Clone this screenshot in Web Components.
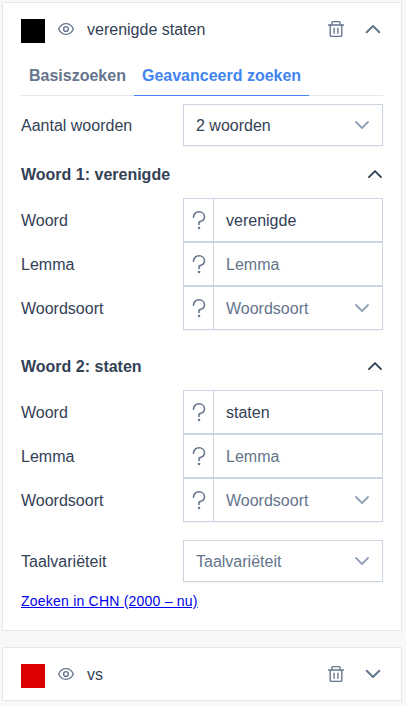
<!DOCTYPE html>
<html lang="nl">
<head>
<meta charset="utf-8">
<title>Zoeken</title>
<style>
  html { background: #f8f8f8; }
  body { margin: 0; padding: 2px; font: 16px/20px "Liberation Sans", Arial, sans-serif; color: #334155; }
</style>
</head>
<body>
<search-panel></search-panel>

<script>
const define = (name, html, setup) => {
  const template = document.createElement('template');
  template.innerHTML = html;
  customElements.define(name, class extends HTMLElement {
    constructor() {
      super();
      this.attachShadow({ mode: 'open' }).append(template.content.cloneNode(true));
    }
    connectedCallback() {
      if (setup) setup(this, this.shadowRoot);
    }
  });
};

const ICONS = {
  eye: [16, 16, '<path d="M.6 8C2.2 4.6 4.8 2.6 8 2.6S13.8 4.6 15.4 8C13.8 11.4 11.2 13.4 8 13.4S2.2 11.4 .6 8Z"/><circle cx="8" cy="8" r="2.4"/>', 1.4],
  trash: [16, 16, '<path d="M.5 4H15.5M2.2 4V13.9Q2.2 15.4 3.7 15.4H12.3Q13.8 15.4 13.8 13.9V4M3.9 3.8V2.1Q3.9.6 5.4.6H10.6Q12.1.6 12.1 2.1V3.8M6.1 7.2V12.2M9.9 7.2V12.2"/>', 1.35],
  up: [16, 16, '<path d="M1.7 11.3L8 5L14.3 11.3"/>', 2],
  down: [16, 16, '<path d="M1.7 4.7L8 11L14.3 4.7"/>', 2],
  'small-up': [14, 14, '<path d="M1 10.1L7 4.1L13 10.1"/>', 1.9],
  'small-down': [14, 14, '<path d="M1 4L7 10L13 4"/>', 1.9],
  help: [14, 20, '<path d="M1.5 7.2C1.5 4.1 3.9 1.8 7 1.8S12.5 4 12.5 6.8C12.5 9.8 10 11 8.6 11.4Q7 11.8 7 13V14.4"/><circle cx="7" cy="18" r=".5"/>', 1.6]
};

define('ui-icon', `
  <style>
    :host { display: block; flex: none; line-height: 0; }
    svg { display: block; fill: none; stroke: currentColor; stroke-linecap: round; stroke-linejoin: round; }
  </style>
  <div></div>`, (host, root) => {
  const [w, h, shape, stroke] = ICONS[host.getAttribute('name')];
  root.querySelector('div').innerHTML =
    `<svg width="${w}" height="${h}" viewBox="0 0 ${w} ${h}" stroke-width="${stroke}">${shape}</svg>`;
});

define('search-card', `
  <style>
    :host { display: block; box-sizing: border-box; width: 400px; border: 1px solid #e2e8f0; background: #fff; padding: 13px 18px 0; }
    header { display: flex; align-items: center; height: 26px; color: #64748b; }
    .swatch { width: 24px; height: 24px; margin: 3px 13px 0 0; background: var(--swatch); align-self: flex-start; }
    .title { flex: 1; margin-left: 13px; padding-top: 2px; color: #334155; }
    .toggle { margin: 0 2px 0 21px; }
  </style>
  <header>
    <div class="swatch"></div>
    <ui-icon name="eye"></ui-icon>
    <span class="title"><slot name="title"></slot></span>
    <ui-icon name="trash"></ui-icon>
    <div class="toggle"><slot name="toggle"></slot></div>
  </header>
  <slot></slot>`);

define('tab-bar', `
  <style>
    :host { display: flex; box-sizing: border-box; height: 41px; margin-top: 13px; border-bottom: 1px solid #e2e8f0; font-weight: 700; color: #64748b; }
    ::slotted(span) { box-sizing: border-box; height: 41px; padding: 11px 8px 0; border-bottom: 1px solid transparent; }
    ::slotted(.active) { color: #4285f0; border-bottom-color: #4285f0; }
  </style>
  <slot></slot>`);

define('form-row', `
  <style>
    :host { display: grid; grid-template-columns: 162px 200px; align-items: center; }
    span { padding-top: 2px; }
  </style>
  <span><slot name="label"></slot></span>
  <slot></slot>`);

define('select-box', `
  <style>
    :host { display: flex; align-items: center; justify-content: space-between; box-sizing: border-box; height: 42px; padding: 0 13px 0 12px; border: 1px solid #cbd5e1; background: #fff; box-shadow: 0 1px 2px rgba(18,18,23,.05); }
    :host([placeholder]) { color: #64748b; }
    span { padding-top: 2px; }
    ui-icon { color: #94a3b8; }
  </style>
  <span><slot></slot></span><ui-icon name="small-down"></ui-icon>`);

define('help-field', `
  <style>
    :host { display: flex; box-sizing: border-box; height: 44px; border: 1px solid #cbd5e1; background: #fff; }
    .help { display: flex; align-items: center; justify-content: center; box-sizing: border-box; width: 30px; padding-left: 1px; border-right: 1px solid #cbd5e1; color: #64748b; }
    .value { display: flex; flex: 1; align-items: center; justify-content: space-between; padding: 0 13px 0 12px; }
    .value span { padding-top: 2px; }
    :host([placeholder]) .value { color: #64748b; }
    .value ui-icon { display: none; color: #94a3b8; }
    :host([dropdown]) .value ui-icon { display: block; }
    :host([dropdown]) { box-shadow: 0 1px 2px rgba(18,18,23,.05); }
  </style>
  <div class="help"><ui-icon name="help"></ui-icon></div>
  <div class="value"><span><slot></slot></span><ui-icon name="small-down"></ui-icon></div>`);

define('word-group', `
  <style>
    :host { display: block; }
    h3 { display: flex; align-items: center; justify-content: space-between; height: 20px; margin: 0 1px 14px 0; font: inherit; font-weight: 700; }
    h3 span { padding-top: 2px; }
  </style>
  <h3><span><slot name="heading"></slot></span><ui-icon name="small-up"></ui-icon></h3>
  <form-row><span slot="label">Woord</span><help-field><slot></slot></help-field></form-row>
  <form-row><span slot="label">Lemma</span><help-field placeholder>Lemma</help-field></form-row>
  <form-row><span slot="label">Woordsoort</span><help-field placeholder dropdown>Woordsoort</help-field></form-row>`);

define('search-panel', `
  <style>
    :host { display: flex; flex-direction: column; gap: 16px; }
    .open { height: 629px; --swatch: #000; }
    .closed { height: 54px; --swatch: #d00; }
    .form { display: flex; flex-direction: column; padding-top: 8px; }
    .first { margin-top: 18px; }
    .second { margin-top: 26px; }
    .variety { margin-top: 18px; }
    a { align-self: flex-start; margin-top: 9px; font-size: 14px; letter-spacing: .22px; color: #00e; }
  </style>
  <search-card class="open">
    <span slot="title">verenigde staten</span>
    <ui-icon slot="toggle" name="up"></ui-icon>
    <tab-bar><span>Basiszoeken</span><span class="active">Geavanceerd zoeken</span></tab-bar>
    <div class="form">
      <form-row><span slot="label">Aantal woorden</span><select-box>2 woorden</select-box></form-row>
      <word-group class="first"><span slot="heading">Woord 1: verenigde</span>verenigde</word-group>
      <word-group class="second"><span slot="heading">Woord 2: staten</span>staten</word-group>
      <form-row class="variety"><span slot="label">Taalvariëteit</span><select-box placeholder>Taalvariëteit</select-box></form-row>
      <a href="#">Zoeken in CHN (2000 – nu)</a>
    </div>
  </search-card>
  <search-card class="closed">
    <span slot="title">vs</span>
    <ui-icon slot="toggle" name="down"></ui-icon>
  </search-card>`);
</script>
</body>
</html>
